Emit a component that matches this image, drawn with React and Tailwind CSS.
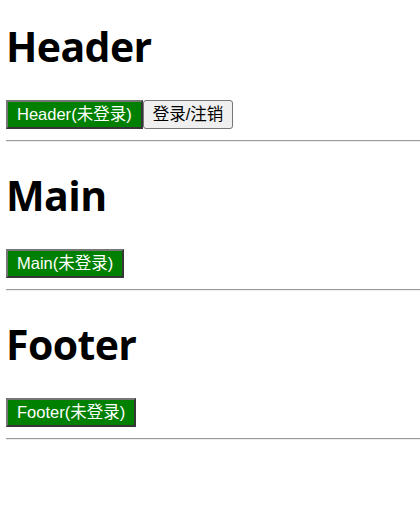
import { useState } from 'react';

const latin = "font-['Liberation_Sans','Noto_Sans_CJK_SC',sans-serif]";

function Section({ title, loggedIn, showToggle, onToggle }) {
  return (
    <div>
      <h1 className="font-['Open_Sans','Noto_Sans_CJK_SC',sans-serif] text-[41px] font-bold leading-[50px] tracking-[-0.6px] text-black">
        {title}
      </h1>
      <div className="mt-[29px] flex">
        <button
          className={`${latin} h-[29px] border-2 border-t-[#767676] border-l-[#767676] border-r-[#363636] border-b-[#363636] bg-[#008000] px-[9px] text-[16.5px] leading-[25px] text-white`}
        >
          {title}({loggedIn ? '已登录' : '未登录'})
        </button>
        {showToggle && (
          <button
            onClick={onToggle}
            className={`${latin} h-[29px] rounded-[3px] border border-[#767676] bg-[#efefef] px-[9px] text-[16.5px] leading-[27px] text-black`}
          >
            登录/注销
          </button>
        )}
      </div>
      <hr className="mt-[11px] mb-[28px] border-t border-b border-t-[#9a9a9a] border-b-[#eeeeee]" />
    </div>
  );
}

export default function App() {
  const [loggedIn, setLoggedIn] = useState(false);

  return (
    <div className="min-h-[506px] bg-white pl-[6px] pt-[21px]">
      <Section title="Header" loggedIn={loggedIn} showToggle onToggle={() => setLoggedIn(!loggedIn)} />
      <Section title="Main" loggedIn={loggedIn} />
      <Section title="Footer" loggedIn={loggedIn} />
    </div>
  );
}
